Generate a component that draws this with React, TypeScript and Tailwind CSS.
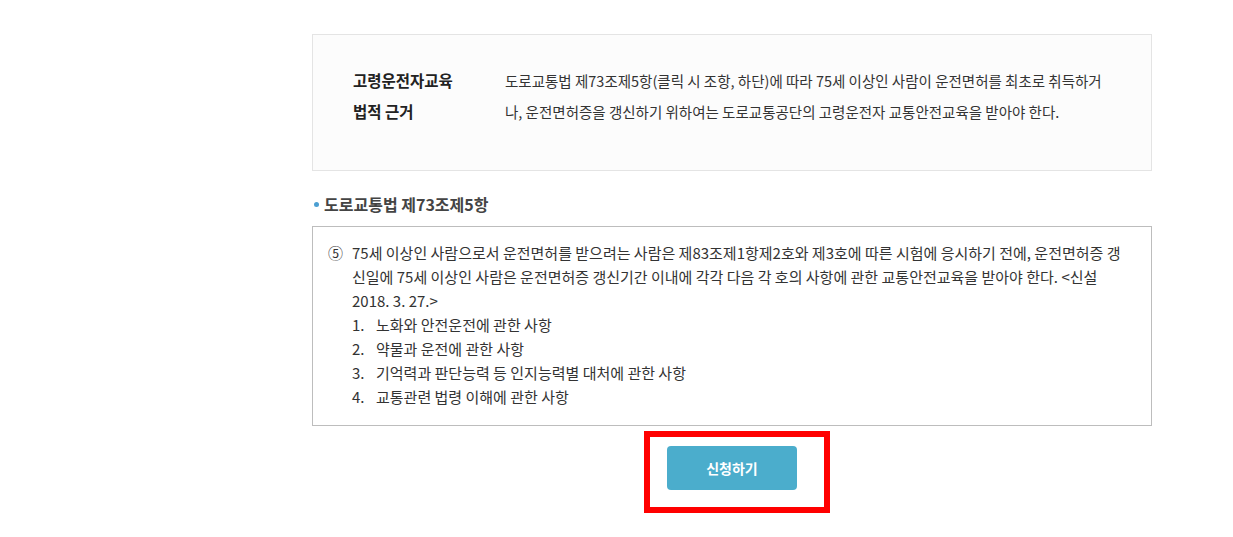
const items = [
  "노화와 안전운전에 관한 사항",
  "약물과 운전에 관한 사항",
  "기억력과 판단능력 등 인지능력별 대처에 관한 사항",
  "교통관련 법령 이해에 관한 사항",
];

export default function App() {
  return (
    <div
      className="min-h-[537px] bg-white pt-[34px] text-[#333]"
      style={{ fontFamily: '"Noto Sans CJK KR", "Noto Sans", sans-serif' }}
    >
      <div className="ml-[312px] w-[840px]">
        <div className="flex border border-[#e4e4e4] bg-[#fcfcfc] pb-[43px] pl-[40px] pr-[40px] pt-[30px]">
          <div className="w-[152px] shrink-0 text-[15.5px] font-bold leading-[31px] text-[#222]">
            고령운전자교육
            <br />
            법적 근거
          </div>
          <p className="w-[606px] text-[14.5px] leading-[31px]">
            도로교통법 제73조제5항(클릭 시 조항, 하단)에 따라 75세 이상인 사람이 운전면허를 최초로 취득하거나, 운전면허증을
            갱신하기 위하여는 도로교통공단의 고령운전자 교통안전교육을 받아야 한다.
          </p>
        </div>

        <h3 className="mt-[21px] flex items-center pl-[2px] text-[16px] font-bold leading-[24px] text-[#444]">
          <span className="mr-[5px] inline-block h-[5px] w-[5px] rounded-full bg-[#4b9fd2]" />
          도로교통법 제73조제5항
        </h3>

        <div className="mt-[10px] border border-[#bdbdbd] pb-[16px] pl-[15px] pr-[18px] pt-[14px] text-[15px] leading-[24px]">
          <div className="flex">
            <span className="w-[24px] shrink-0">⑤</span>
            <p>
              75세 이상인 사람으로서 운전면허를 받으려는 사람은 제83조제1항제2호와 제3호에 따른 시험에 응시하기 전에, 운전면허증
              갱신일에 75세 이상인 사람은 운전면허증 갱신기간 이내에 각각 다음 각 호의 사항에 관한 교통안전교육을 받아야 한다. &lt;신설
              2018. 3. 27.&gt;
            </p>
          </div>
          <ol className="pl-[24px]">
            {items.map((item, i) => (
              <li key={item} className="flex">
                <span className="w-[24px] shrink-0">{i + 1}.</span>
                {item}
              </li>
            ))}
          </ol>
        </div>

        <div className="ml-[332px] mt-[5px] w-[186px] border-[6px] border-[#ff0000] pb-[17px] pl-[17px] pt-[9px]">
          <button className="flex h-[44px] w-[130px] items-center justify-center rounded-[4px] bg-[#4badcc] text-[14px] font-bold text-white">
            신청하기
          </button>
        </div>
      </div>
    </div>
  );
}
